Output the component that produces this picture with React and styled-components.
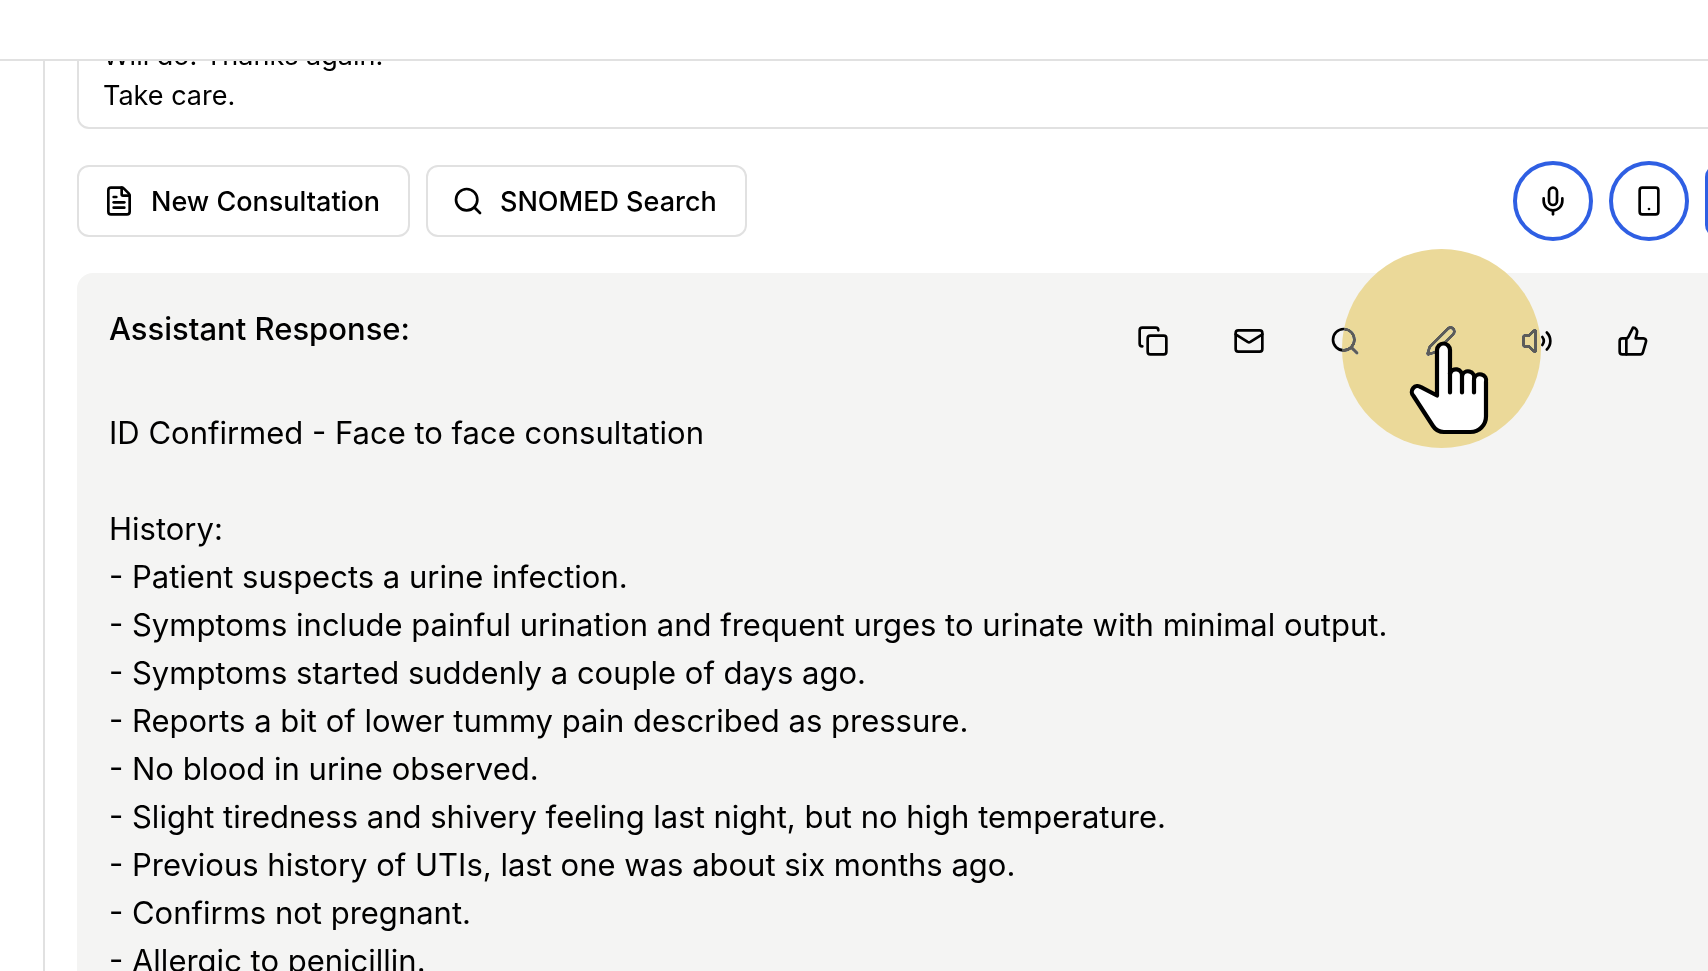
import React from 'react';
import styled, { createGlobalStyle } from 'styled-components';
import {
  FileText,
  Search,
  Mic,
  Smartphone,
  Copy,
  Mail,
  Pen,
  Volume2,
  ThumbsUp,
  ThumbsDown,
} from 'lucide-react';

const GlobalStyle = createGlobalStyle`
  *, *::before, *::after { box-sizing: border-box; }
  body {
    margin: 0;
    background: #fff;
    color: #000;
    font-family: Inter, "Liberation Sans", sans-serif;
  }
  button, textarea { font: inherit; color: inherit; }
`;

const Page = styled.div`
  display: flex;
  flex-direction: column;
  height: 100vh;
  overflow: hidden;
`;

const Header = styled.header`
  flex: none;
  height: 61px;
  background: #fff;
  border-bottom: 2px solid #e1e1e1;
  position: relative;
  z-index: 1;
`;

const Body = styled.div`
  flex: 1;
  display: flex;
  min-height: 0;
`;

const Sidebar = styled.aside`
  flex: none;
  width: 45px;
  border-right: 2px solid #e1e1e1;
`;

/* The column runs past the right edge of the window and is scrolled under the header. */
const Content = styled.main`
  flex: 1;
  min-width: 0;
  display: flex;
  flex-direction: column;
  gap: 32px;
  margin: -40px -93px 0 32px;
`;

const Transcript = styled.textarea`
  display: block;
  flex: none;
  width: 100%;
  height: 108px;
  padding: 13px 24px 11px;
  border: 2px solid #e1e1e1;
  border-radius: 12px;
  background: #fff;
  font-size: 27px;
  line-height: 40px;
  resize: none;
  overflow: hidden;
  outline: none;
`;

const Toolbar = styled.div`
  display: flex;
  align-items: center;
  justify-content: space-between;
`;

const Group = styled.div`
  display: flex;
  align-items: center;
  gap: 16px;
`;

const OutlineButton = styled.button`
  display: flex;
  align-items: center;
  gap: 16px;
  height: 72px;
  padding: 0 28px 0 24px;
  border: 2px solid #e1e1e1;
  border-radius: 12px;
  background: #fff;
  font-size: 27px;
  font-weight: 500;
  white-space: nowrap;
`;

const RoundButton = styled.button`
  display: grid;
  place-items: center;
  width: 80px;
  height: 80px;
  padding: 0;
  border: 4px solid #2f5fe3;
  border-radius: 50%;
  background: #fff;
`;

const PrimaryButton = styled.button`
  width: 96px;
  height: 72px;
  border: 0;
  border-radius: 12px;
  background: #2f5fe3;
`;

const Card = styled.section`
  flex: none;
  padding: 32px;
  border-radius: 16px;
  background: #f4f4f3;
`;

const CardHeader = styled.div`
  display: flex;
  align-items: flex-start;
  justify-content: space-between;
  margin-bottom: 32px;
`;

const Title = styled.h2`
  margin: 0;
  font-size: 31px;
  line-height: 48px;
  font-weight: 500;
`;

const Tool = styled.button`
  position: relative;
  display: grid;
  place-items: center;
  width: 80px;
  height: 72px;
  padding: 0;
  border: 0;
  background: none;
`;

const Note = styled.div`
  font-size: 31px;
  line-height: 48px;
  white-space: pre-wrap;
`;

/* Two stacked discs: one tints the light surface, the other softens dark strokes. */
const Spot = styled.span`
  position: absolute;
  z-index: 2;
  left: -59px;
  top: -56px;
  width: 199px;
  height: 199px;
  border-radius: 50%;
  background: ${({ $color }) => $color};
  mix-blend-mode: ${({ $blend }) => $blend};
  pointer-events: none;
`;

const Hand = styled.svg`
  position: absolute;
  z-index: 3;
  left: -60px;
  top: -56px;
  width: 200px;
  height: 200px;
  pointer-events: none;
`;

const transcript = 'Will do. Thanks again.\nTake care.';

const note = `ID Confirmed - Face to face consultation

History:
- Patient suspects a urine infection.
- Symptoms include painful urination and frequent urges to urinate with minimal output.
- Symptoms started suddenly a couple of days ago.
- Reports a bit of lower tummy pain described as pressure.
- No blood in urine observed.
- Slight tiredness and shivery feeling last night, but no high temperature.
- Previous history of UTIs, last one was about six months ago.
- Confirms not pregnant.
- Allergic to penicillin.`;

const tools = [
  { label: 'Copy', Icon: Copy },
  { label: 'Email', Icon: Mail },
  { label: 'Search', Icon: Search },
  { label: 'Edit', Icon: Pen, pointed: true },
  { label: 'Read aloud', Icon: Volume2 },
  { label: 'Good response', Icon: ThumbsUp },
  { label: 'Bad response', Icon: ThumbsDown },
];

function HandPointer() {
  return (
    <>
      <Spot $color="#ebd999" $blend="darken" />
      <Spot $color="#5c5c5a" $blend="lighten" />
      <Hand viewBox="0 0 200 200" aria-hidden="true">
        <g fill="#fff" stroke="#000" strokeWidth="4.2" strokeLinecap="round" strokeLinejoin="round">
          <path d="M96 146.500V101a6.500 6.500 0 0 1 13 0v24a6.100 6.100 0 0 1 12 2a6.100 6.100 0 0 1 12 3a6.100 6.100 0 0 1 12 3v34.500a15.500 15.500 0 0 1-15.500 15.500H103a13 13 0 0 1-11-6L72.500 147a5.800 5.800 0 0 1 7.500-8.800z" />
          <path d="M109 124v19.500M121 127v16.500M133 131v12.500" fill="none" />
        </g>
      </Hand>
    </>
  );
}

export default function App() {
  return (
    <Page>
      <GlobalStyle />
      <Header />
      <Body>
        <Sidebar />
        <Content>
          <Transcript aria-label="Transcript" defaultValue={transcript} />
          <Toolbar>
            <Group>
              <OutlineButton type="button">
                <FileText size={32} />
                New Consultation
              </OutlineButton>
              <OutlineButton type="button">
                <Search size={32} />
                SNOMED Search
              </OutlineButton>
            </Group>
            <Group>
              <RoundButton type="button" aria-label="Record">
                <Mic size={32} />
              </RoundButton>
              <RoundButton type="button" aria-label="Use phone">
                <Smartphone size={32} />
              </RoundButton>
              <PrimaryButton type="button" aria-label="Generate" />
            </Group>
          </Toolbar>
          <Card>
            <CardHeader>
              <Title>Assistant Response:</Title>
              <Group>
                {tools.map(({ label, Icon, pointed }) => (
                  <Tool key={label} type="button" aria-label={label}>
                    <Icon size={32} />
                    {pointed && <HandPointer />}
                  </Tool>
                ))}
              </Group>
            </CardHeader>
            <Note>{note}</Note>
          </Card>
        </Content>
      </Body>
    </Page>
  );
}
